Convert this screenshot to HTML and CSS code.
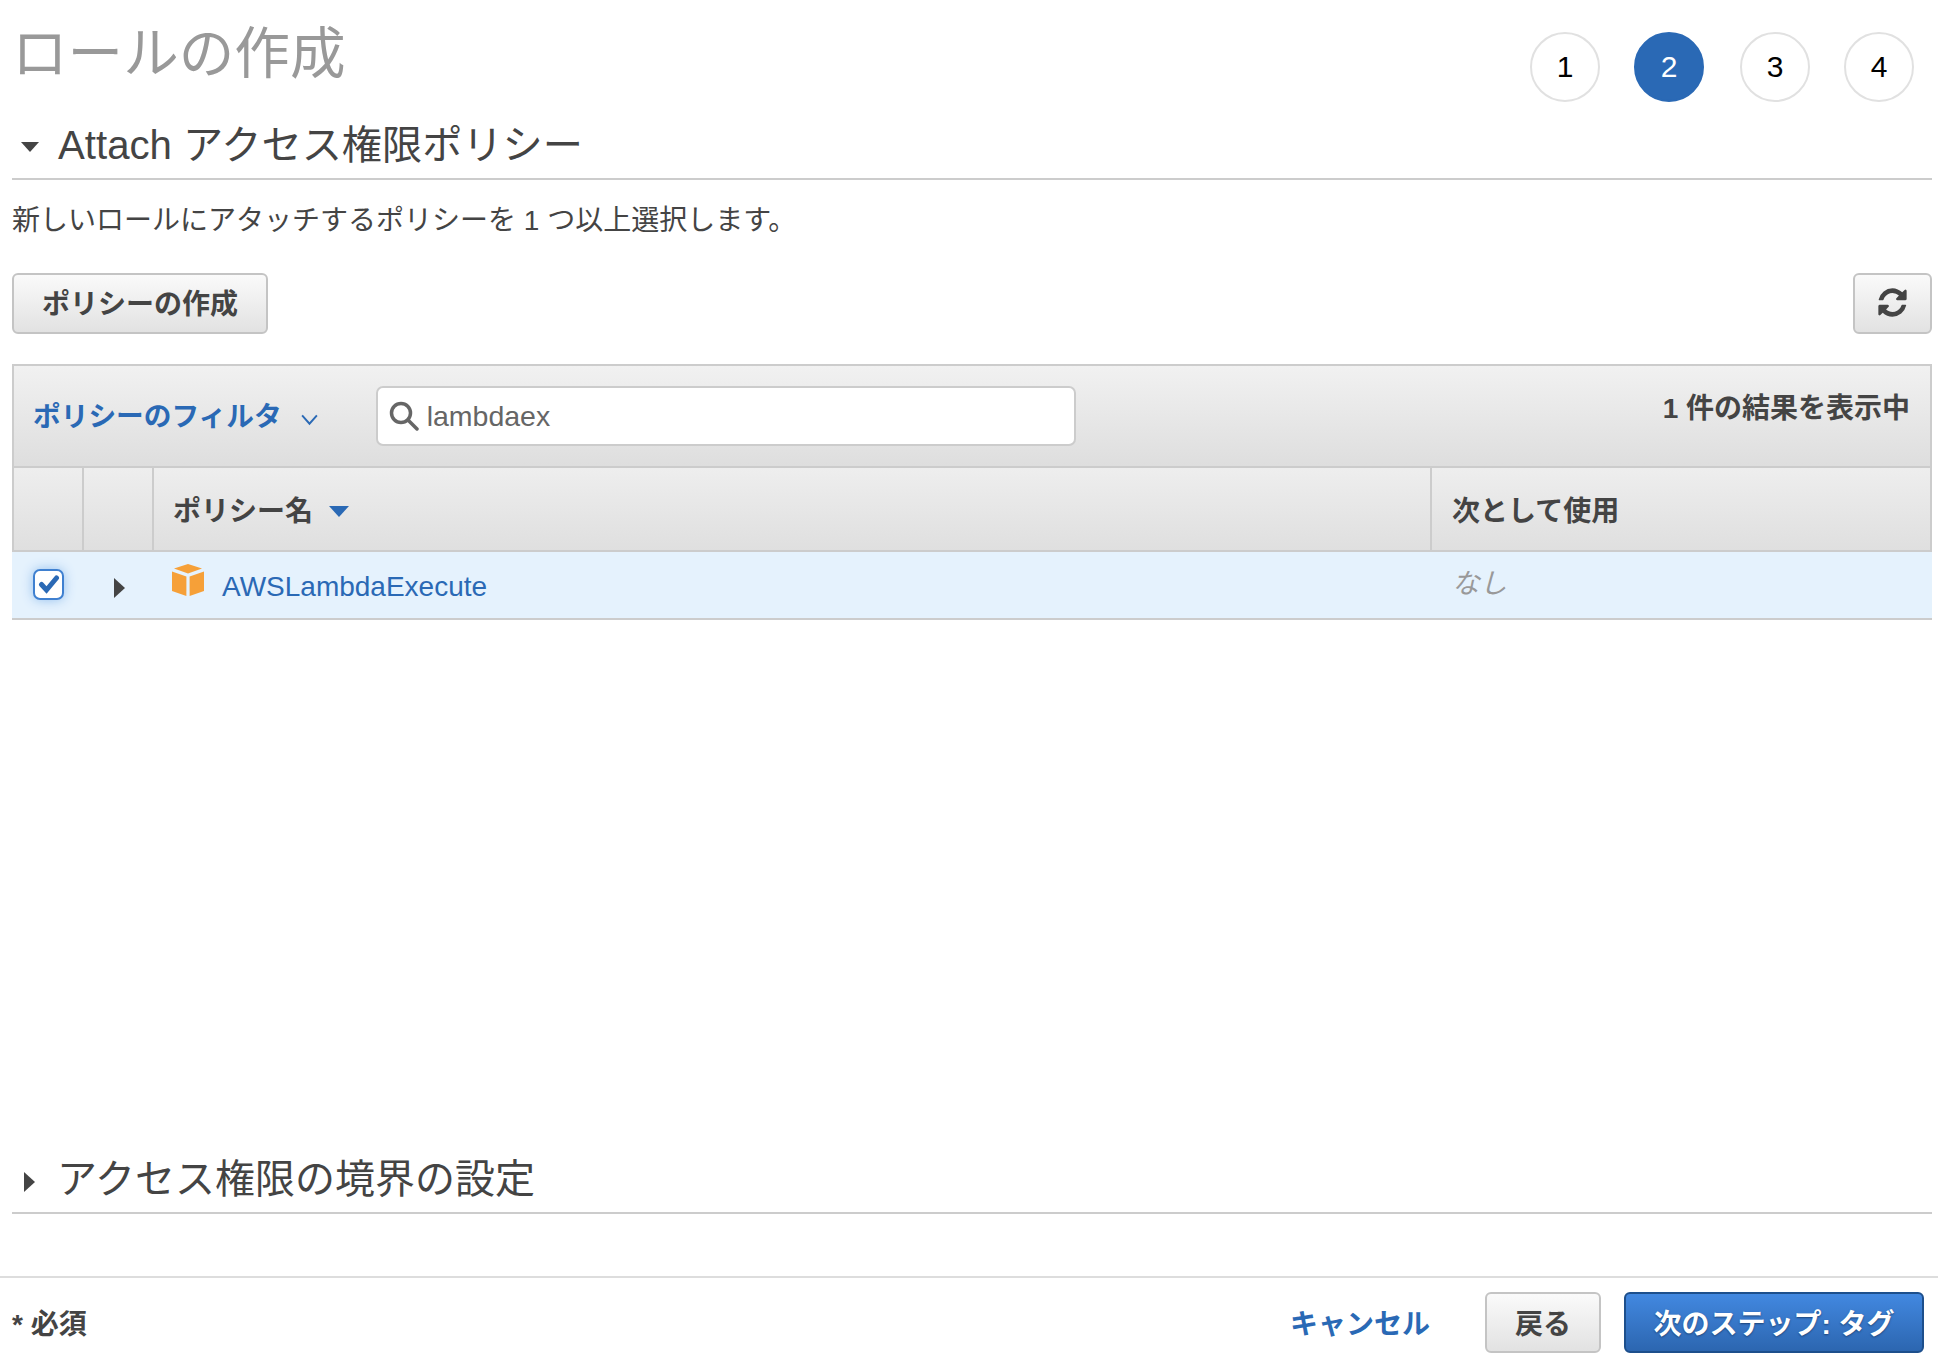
FILE: index.html
```html
<!DOCTYPE html>
<html lang="ja">
<head>
<meta charset="utf-8">
<title>ロールの作成</title>
<link rel="stylesheet" href="styles.css">
</head>
<body>
<div class="page">
  <main class="content">
    <header class="top">
      <h1 class="title">ロールの作成</h1>
      <ol class="steps">
        <li class="step">1</li>
        <li class="step step-active">2</li>
        <li class="step">3</li>
        <li class="step">4</li>
      </ol>
    </header>

    <h2 class="section-head">
      <span class="tri-down"></span>
      <span class="attach-text">Attach アクセス権限ポリシー</span>
    </h2>
    <p class="desc">新しいロールにアタッチするポリシーを 1 つ以上選択します。</p>

    <div class="toolbar">
      <button class="btn btn-create">ポリシーの作成</button>
      <button class="btn btn-refresh" aria-label="更新">
        <svg class="refresh-icon" viewBox="0 0 1792 1792"><path d="M1639 1056q0 5-1 7-64 268-268 434.5t-478 166.5q-146 0-282.5-55t-243.5-157l-129 129q-19 19-45 19t-45-19-19-45v-448q0-26 19-45t45-19h448q26 0 45 19t19 45-19 45l-137 137q71 66 161 102t187 36q134 0 250-65t186-179q11-17 53-117 8-23 30-23h192q13 0 22.5 9.5t9.5 22.5zm25-800v448q0 26-19 45t-45 19h-448q-26 0-45-19t-19-45 19-45l138-138q-148-137-349-137-134 0-250 65t-186 179q-11 17-53 117-8 23-30 23h-199q-13 0-22.5-9.5t-9.5-22.5v-7q65-268 270-434.5t480-166.5q146 0 284 55.5t245 156.5l130-129q19-19 45-19t45 19 19 45z"/></svg>
      </button>
    </div>

    <section class="table">
      <div class="filter-bar">
        <a class="filter-link">ポリシーのフィルタ</a>
        <svg class="chevron" viewBox="0 0 18 12"><path d="M2 2l7 8 7-8"/></svg>
        <div class="search">
          <svg class="search-icon" viewBox="0 0 30 30"><circle cx="12" cy="12" r="9.5"/><path d="M19 19l9 9"/></svg>
          <span class="search-text">lambdaex</span>
        </div>
        <div class="result-count">1 件の結果を表示中</div>
      </div>
      <div class="grid-row head-row">
        <div class="cell head-cell"></div>
        <div class="cell head-cell"></div>
        <div class="cell head-cell cell-name">ポリシー名<span class="sort-tri"></span></div>
        <div class="cell head-cell cell-last">次として使用</div>
      </div>
      <div class="grid-row body-row">
        <div class="cell body-cell cell-check">
          <span class="checkbox"><svg viewBox="0 0 22 20"><path d="M3.500 10.500l5 5.500L18.500 4"/></svg></span>
        </div>
        <div class="cell body-cell cell-expand"><span class="tri-right"></span></div>
        <div class="cell body-cell cell-policy">
          <svg class="cube" viewBox="0 0 32 32"><path d="M16 0l14 4.600-14 5-14-5z"/><path d="M0 7.500l14.400 5V32L0 27z"/><path d="M32 7.500l-14.400 5V32L32 27z"/></svg>
          <a class="policy-link">AWSLambdaExecute</a>
        </div>
        <div class="cell body-cell cell-none">なし</div>
      </div>
    </section>

    <h2 class="section-head section-boundary">
      <span class="tri-right tri-section"></span>
      <span>アクセス権限の境界の設定</span>
    </h2>
  </main>

  <footer class="footer">
    <div class="required">* 必須</div>
    <a class="cancel">キャンセル</a>
    <button class="btn btn-back">戻る</button>
    <button class="btn btn-primary">次のステップ: タグ</button>
  </footer>
</div>
</body>
</html>
```

FILE: styles.css
```css
* { box-sizing: border-box; }

html, body {
  margin: 0;
  padding: 0;
  background: #fff;
}

body {
  font-family: "Liberation Sans", "Noto Sans CJK JP", sans-serif;
  color: #444;
  font-size: 28px;
}

.page {
  height: 1366px;
  display: flex;
  flex-direction: column;
  overflow: hidden;
}

.content {
  flex: 1;
  display: flex;
  flex-direction: column;
  padding: 0 6px 0 12px;
}

.top {
  height: 110px;
  display: flex;
  justify-content: space-between;
}

.title {
  margin: 0;
  font-size: 55.600px;
  font-weight: 400;
  line-height: 108px;
  height: 108px;
  color: #999;
}

.steps {
  list-style: none;
  margin: 32px 18px 0 0;
  padding: 0;
  display: flex;
  gap: 34px;
}

.step {
  width: 70px;
  height: 70px;
  border: 2px solid #e1e1e1;
  border-radius: 50%;
  display: flex;
  align-items: center;
  justify-content: center;
  font-size: 30px;
  color: #000;
}

.step-active {
  background: #2a69b5;
  border-color: #2a69b5;
  color: #fff;
  margin-right: 2px;
}

.section-head {
  margin: 0;
  height: 70px;
  display: flex;
  align-items: center;
  gap: 19px;
  padding: 0 0 5px 9px;
  border-bottom: 2px solid #ccc;
  font-size: 40px;
  font-weight: 400;
  color: #444;
}

.attach-text { font-size: 40.200px; }

.tri-down {
  width: 0;
  height: 0;
  border-left: 9px solid transparent;
  border-right: 9px solid transparent;
  border-top: 10px solid #444;
  margin-top: 10px;
}

.tri-right {
  display: block;
  width: 0;
  height: 0;
  border-top: 10px solid transparent;
  border-bottom: 10px solid transparent;
  border-left: 11px solid #444;
}

.tri-section {
  margin-left: 3px;
  margin-right: 6px;
  margin-top: 13px;
}

.desc {
  margin: 21px 0 0;
  font-size: 28px;
  line-height: 40px;
}

.toolbar {
  margin-top: 32px;
  display: flex;
  justify-content: space-between;
}

.btn {
  height: 61px;
  border: 2px solid #c4c4c4;
  border-radius: 6px;
  background: linear-gradient(#fafafa, #e2e2e2);
  font-family: inherit;
  font-size: 28px;
  font-weight: 700;
  color: #444;
  padding: 0 0 2px;
  display: flex;
  align-items: center;
  justify-content: center;
}

.btn-create { width: 256px; padding-bottom: 4px; }
.btn-refresh { width: 79px; }

.refresh-icon {
  width: 33px;
  height: 33px;
  fill: #444;
}

.table {
  margin-top: 30px;
  border-top: 2px solid #ccc;
}

.filter-bar {
  height: 102px;
  display: flex;
  align-items: center;
  padding: 0 20px 0 19px;
  background: linear-gradient(#f1f1f1, #dedede);
  border: solid #ccc;
  border-width: 0 2px 2px;
}

.filter-link {
  font-size: 27.700px;
  font-weight: 700;
  color: #2a69b5;
  white-space: nowrap;
  margin-top: -4px;
}

.chevron {
  width: 19px;
  height: 13px;
  margin: 6px 0 0 18px;
  fill: none;
  stroke: #2a69b5;
  stroke-width: 1.800;
}

.search {
  width: 700px;
  height: 60px;
  margin-left: 57px;
  background: #fff;
  border: 2px solid #ccc;
  border-radius: 7px;
  display: flex;
  align-items: center;
  padding-left: 11px;
  gap: 8px;
}

.search-icon {
  width: 30px;
  height: 30px;
  fill: none;
  stroke: #666;
  stroke-width: 3.500;
  stroke-linecap: round;
}

.search-text {
  font-size: 28.500px;
  color: #666;
}

.result-count {
  margin-left: auto;
  margin-top: -20px;
  font-weight: 700;
  color: #444;
}

.grid-row {
  display: grid;
  grid-template-columns: 70px 70px 1278px 1fr;
}

.head-row {
  height: 84px;
  background: linear-gradient(#eeeeee, #dfdfdf);
  border: solid #ccc;
  border-width: 0 2px 2px;
}

.cell {
  display: flex;
  align-items: center;
}

.head-cell {
  border-right: 2px solid #ccc;
  font-weight: 700;
  padding: 0 0 1px 19px;
}

.head-cell.cell-last { border-right: 0; padding-left: 20px; }

.sort-tri {
  width: 0;
  height: 0;
  margin: 6px 0 0 16px;
  border-left: 10px solid transparent;
  border-right: 10px solid transparent;
  border-top: 11px solid #2a69b5;
}

.body-row {
  height: 68px;
  background: #e5f2fd;
  border-bottom: 2px solid #ccc;
}

.cell-check { padding-left: 21px; }

.checkbox {
  width: 31px;
  height: 31px;
  background: #fff;
  border: 2px solid #3f80d0;
  border-radius: 7px;
  box-shadow: 0 0 12px #94bfee;
  display: flex;
  align-items: center;
  justify-content: center;
  margin-top: -2px;
}

.checkbox svg {
  width: 22px;
  height: 20px;
  fill: none;
  stroke: #2a69b5;
  stroke-width: 5;
  stroke-linecap: round;
}

.cell-expand { padding: 6px 0 0 32px; }

.cell-policy {
  padding-left: 20px;
  gap: 18px;
}

.cube {
  width: 32px;
  height: 32px;
  fill: #f6a038;
  margin-top: -10px;
}

.policy-link {
  color: #2a69b5;
  margin-top: 4px;
}

.cell-none {
  padding: 0 0 8px 22px;
  font-style: italic;
  font-size: 27.500px;
  color: #999;
}

.section-boundary {
  margin-top: auto;
  margin-bottom: 62px;
  gap: 0;
  padding-left: 9px;
}

.section-boundary .tri-section { margin-right: 22px; }

.footer {
  height: 90px;
  border-top: 2px solid #ddd;
  display: flex;
  align-items: flex-start;
  padding: 14px 14px 0 12px;
  font-weight: 700;
}

.required {
  line-height: 65px;
  margin-right: auto;
}

.cancel {
  line-height: 65px;
  color: #2a69b5;
  margin-right: 55px;
}

.btn-back {
  width: 116px;
  margin-right: 23px;
}

.btn-primary {
  width: 300px;
  border-color: #1d4f8c;
  background: linear-gradient(#4288e0, #2c66b0);
  color: #fff;
  text-shadow: 0 1px 2px #1c4377;
}
```
